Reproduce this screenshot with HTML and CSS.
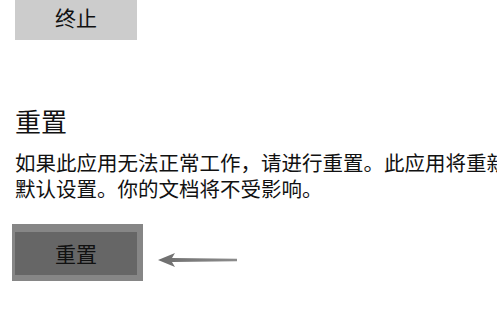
FILE: index.html
```html
<!DOCTYPE html>
<html lang="zh-CN">
<head>
<meta charset="utf-8">
<link rel="stylesheet" href="styles.css">
</head>
<body>
<div class="page">
  <div class="btn-stop">终止</div>
  <h2 class="title">重置</h2>
  <p class="desc">如果此应用无法正常工作，请进行重置。此应用将重新安装并恢复到默认设置。你的文档将不受影响。</p>
  <div class="reset-row">
    <div class="highlight">
      <div class="btn-reset">重置</div>
    </div>
    <svg class="arrow" width="80" height="16" viewBox="0 0 80 16">
      <defs>
        <linearGradient id="g" x1="0" y1="0" x2="1" y2="0">
          <stop offset="0" stop-color="#6e6e6e"/>
          <stop offset="1" stop-color="#8c8c8c"/>
        </linearGradient>
      </defs>
      <path d="M0 8 L17 1 L14 6 L79 6.8 L79 9.2 L14 10 L17 15 Z" fill="url(#g)"/>
    </svg>
  </div>
</div>
</body>
</html>
```
FILE: styles.css
```css
html, body {
  margin: 0;
  padding: 0;
  background: #ffffff;
  overflow: hidden;
}
body {
  width: 497px;
  height: 327px;
  font-family: "Noto Sans CJK SC", "Noto Sans", sans-serif;
  color: #111111;
}
.page {
  padding-left: 15px;
}
.btn-stop {
  width: 122px;
  height: 35px;
  padding-bottom: 5px;
  line-height: 35px;
  background: #cccccc;
  text-align: center;
  font-size: 21px;
}
.title {
  margin: 66px 0 0 0;
  font-size: 26px;
  font-weight: normal;
  line-height: 30px;
}
.desc {
  margin: 14px 0 0 0;
  width: 622px;
  font-size: 20.5px;
  line-height: 25.5px;
}
.reset-row {
  display: flex;
  align-items: flex-start;
  margin-top: 23px;
  margin-left: -3px;
}
.highlight {
  background: #868686;
  padding: 8px 6px 6px 3px;
}
.btn-reset {
  width: 122px;
  height: 42px;
  padding-bottom: 1px;
  line-height: 42px;
  background: #666666;
  text-align: center;
  font-size: 21px;
  color: #111111;
}
.arrow {
  display: block;
  margin-left: 15px;
  margin-top: 28px;
}
```
